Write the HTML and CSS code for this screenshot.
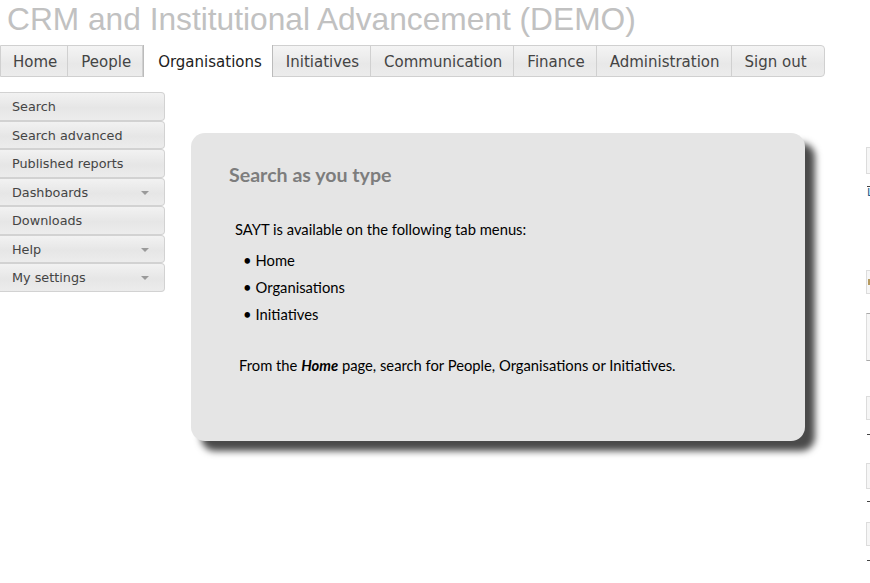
FILE: index.html
```html
<!DOCTYPE html>
<html>
<head>
<meta charset="utf-8">
<link rel="stylesheet" href="styles.css">
</head>
<body>
<h1 class="title">CRM and Institutional Advancement (DEMO)</h1>
<nav class="tabs">
  <a class="tab first">Home</a>
  <a class="tab">People</a>
  <a class="tab active">Organisations</a>
  <a class="tab">Initiatives</a>
  <a class="tab">Communication</a>
  <a class="tab">Finance</a>
  <a class="tab">Administration</a>
  <a class="tab last">Sign out</a>
</nav>
<div class="layout">
  <ul class="side">
    <li class="side-item">Search</li>
    <li class="side-item">Search advanced</li>
    <li class="side-item">Published reports</li>
    <li class="side-item">Dashboards<span class="caret"></span></li>
    <li class="side-item">Downloads</li>
    <li class="side-item">Help<span class="caret"></span></li>
    <li class="side-item">My settings<span class="caret"></span></li>
  </ul>
  <section class="panel">
    <h2 class="panel-title">Search as you type</h2>
    <p class="intro">SAYT is available on the following tab menus:</p>
    <ul class="bullets">
      <li>Home</li>
      <li>Organisations</li>
      <li>Initiatives</li>
    </ul>
    <p class="from">From the <b><i>Home</i></b> page, search for People, Organisations or Initiatives.</p>
  </section>
  <div class="edge">
    <div class="edge-box b1"></div>
    <div class="edge-line l1"></div>
    <div class="edge-text">L</div>
    <div class="edge-box b2"><span class="dot"></span></div>
    <div class="edge-box b3"></div>
    <div class="edge-box b4"></div>
    <div class="edge-line l2"></div>
    <div class="edge-box b5"></div>
    <div class="edge-line l3"></div>
    <div class="edge-box b6"></div>
    <div class="edge-line l4"></div>
  </div>
</div>
</body>
</html>
```

FILE: styles.css
```css
html, body {
  margin: 0;
  padding: 0;
  background: #fff;
  overflow: hidden;
}
body {
  font-family: "DejaVu Sans", Verdana, sans-serif;
  width: 870px;
  height: 583px;
}
.title {
  margin: 0 0 7px 0;
  padding-left: 7px;
  font-family: "Liberation Sans", Arial, sans-serif;
  font-weight: normal;
  font-size: 31.7px;
  line-height: 38px;
  color: #c1c1c1;
  white-space: nowrap;
}
.tabs {
  display: flex;
  width: max-content;
  height: 32px;
  box-sizing: border-box;
  border: 1px solid #d0d0d0;
  border-radius: 0 4px 4px 0;
  background: linear-gradient(#f4f4f4, #e8e8e8 60%, #ececec);
}
.tab {
  display: flex;
  align-items: center;
  padding: 1px 11px 0 13px;
  font-size: 15px;
  color: #444;
  border-right: 1px solid #d0d0d0;
  white-space: nowrap;
}
.tab.first {
  padding: 1px 10px 0 12px;
}
.tab.active {
  background: #fff;
  border-left: 1px solid #bbb;
  border-right: 1px solid #bbb;
  margin: -1px 0;
  padding: 1px 10px 0 14px;
  color: #222;
}
.tab.last {
  border-right: none;
  padding-right: 17px;
}
.layout {
  display: flex;
  align-items: flex-start;
  margin-top: 15px;
}
.side {
  list-style: none;
  margin: 0;
  padding: 0;
  width: 165px;
  flex: none;
}
.side-item {
  height: 28.5px;
  box-sizing: border-box;
  border: 1px solid #d2d2d2;
  border-left: none;
  border-radius: 0 4px 4px 0;
  background: linear-gradient(#f2f2f2, #e6e6e6 55%, #ececec);
  font-size: 12.8px;
  color: #444;
  padding: 1px 0 0 12px;
  display: flex;
  align-items: center;
  position: relative;
}
.caret {
  position: absolute;
  right: 15px;
  top: 12px;
  width: 0;
  height: 0;
  border-left: 4px solid transparent;
  border-right: 4px solid transparent;
  border-top: 4px solid #9a9a9a;
}
.panel {
  flex: none;
  margin-left: 26px;
  margin-top: 41px;
  width: 614px;
  height: 308px;
  box-sizing: border-box;
  background: #e5e5e5;
  border-radius: 14px;
  box-shadow: 10px 10px 7px #4a4a4a;
  padding: 30px 0 0 0;
  font-family: Lato, "Open Sans", sans-serif;
  color: #000;
}
.panel-title {
  margin: 0 0 0 38px;
  font-size: 19.6px;
  line-height: 24px;
  font-weight: bold;
  color: #7d7d7d;
}
.intro {
  margin: 33px 0 0 44px;
  font-size: 14.75px;
  line-height: 18px;
}
.bullets {
  list-style: none;
  margin: 9px 0 0 52px;
  padding: 0;
  font-size: 14.75px;
}
.bullets li {
  line-height: 27px;
}
.bullets li::before {
  content: "•";
  margin-right: 4px;
}
.from {
  margin: 28px 0 0 48px;
  font-size: 14.75px;
  line-height: 18px;
}
.edge {
  flex: 1;
  margin-left: 61px;
  overflow: hidden;
  height: 490px;
  display: flex;
  flex-direction: column;
}
.edge-box {
  width: 30px;
  box-sizing: border-box;
  border: 1px solid #dcdcdc;
  background: #f6f6f6;
  flex: none;
}
.edge-line {
  width: 6px;
  height: 1px;
  margin-left: 1px;
  background: #444;
  flex: none;
}
.edge-text {
  font-size: 11px;
  line-height: 12px;
  color: #1a5a8a;
  margin-left: 1px;
}
.b1 { height: 27px; margin-top: 55px; }
.l1 { margin-top: 12px; }
.b2 { height: 24px; margin-top: 71px; position: relative; }
.dot {
  position: absolute;
  left: 1px;
  top: 8px;
  width: 3px;
  height: 6px;
  background: #b59a60;
}
.b3 { height: 48px; margin-top: 19px; border-color: #aaa #ddd; }
.b4 { height: 24px; margin-top: 35px; }
.l2 { margin-top: 14px; }
.b5 { height: 26px; margin-top: 28px; }
.l3 { margin-top: 12px; }
.b6 { height: 24px; margin-top: 20px; }
.l4 { margin-top: 14px; }
```
